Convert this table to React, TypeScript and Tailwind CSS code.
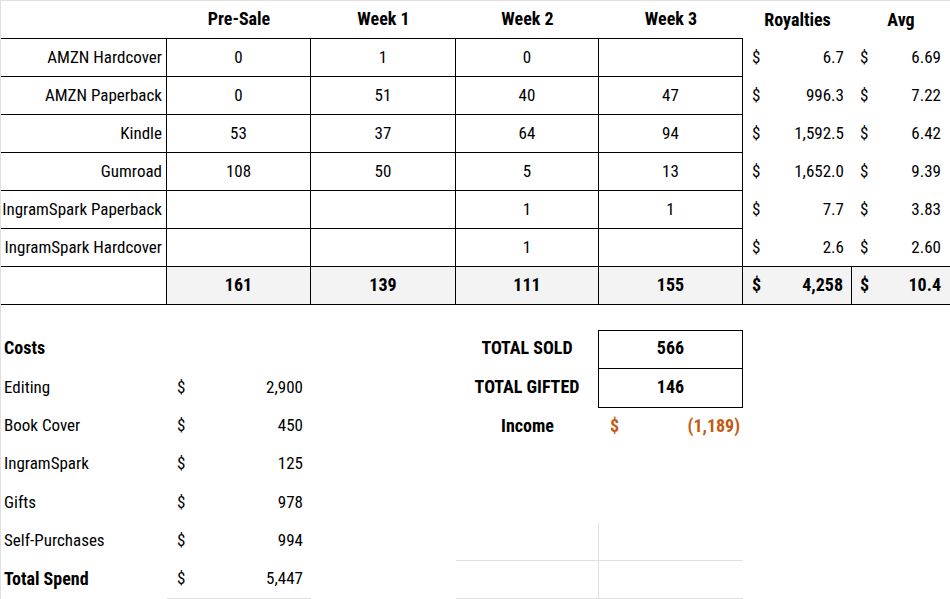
import React from 'react';

type Row = {
  label: string;
  weeks: string[];
  royalty: string;
  avg: string;
};

const rows: Row[] = [
  { label: 'AMZN Hardcover', weeks: ['0', '1', '0', ''], royalty: '6.7', avg: '6.69' },
  { label: 'AMZN Paperback', weeks: ['0', '51', '40', '47'], royalty: '996.3', avg: '7.22' },
  { label: 'Kindle', weeks: ['53', '37', '64', '94'], royalty: '1,592.5', avg: '6.42' },
  { label: 'Gumroad', weeks: ['108', '50', '5', '13'], royalty: '1,652.0', avg: '9.39' },
  { label: 'IngramSpark Paperback', weeks: ['', '', '1', '1'], royalty: '7.7', avg: '3.83' },
  { label: 'IngramSpark Hardcover', weeks: ['', '', '1', ''], royalty: '2.6', avg: '2.60' },
];

const costs = [
  { label: 'Editing', value: '2,900' },
  { label: 'Book Cover', value: '450' },
  { label: 'IngramSpark', value: '125' },
  { label: 'Gifts', value: '978' },
  { label: 'Self-Purchases', value: '994' },
];

const cols = 'grid grid-cols-[166px_144px_145px_143px_144px_109px_98px]';

const App: React.FC = () => {
  return (
    <div
      className="w-[950px] h-[599px] overflow-hidden bg-white border-t border-l border-[#e0e0e0] text-[17px] leading-none text-black whitespace-nowrap font-stretch-condensed"
      style={{ fontFamily: "'Roboto Condensed', 'DejaVu Sans Condensed', 'Liberation Sans', sans-serif" }}
    >
      {/* Sales table */}
      <div className={`${cols} [&>div]:pb-px`}>
        {/* Header */}
        <div className="h-[38px] border-b border-black" />
        {['Pre-Sale', 'Week 1', 'Week 2', 'Week 3'].map((h) => (
          <div key={h} className="h-[38px] border-b border-black flex items-center justify-center font-bold text-[18px]">
            {h}
          </div>
        ))}
        <div className="h-[38px] flex items-center justify-center font-bold text-[18px]">Royalties</div>
        <div className="h-[38px] flex items-center justify-center font-bold text-[18px]">Avg</div>

        {rows.map((r) => (
          <React.Fragment key={r.label}>
            <div className="h-[38px] border-b border-r border-black flex items-center justify-end pr-[4px]">{r.label}</div>
            {r.weeks.map((w, i) => (
              <div key={i} className="h-[38px] border-b border-r border-black flex items-center justify-center">
                {w}
              </div>
            ))}
            <div className="h-[38px] flex items-center justify-between pl-[9px] pr-[8px]">
              <span>$</span>
              <span>{r.royalty}</span>
            </div>
            <div className="h-[38px] flex items-center justify-between pl-[8px] pr-[9px]">
              <span>$</span>
              <span>{r.avg}</span>
            </div>
          </React.Fragment>
        ))}

        {/* Totals */}
        <div className="h-[38px] border-b border-r border-black" />
        {['161', '139', '111', '155'].map((t) => (
          <div key={t} className="h-[38px] border-b border-r border-black bg-[#f3f3f3] flex items-center justify-center font-bold text-[18px]">
            {t}
          </div>
        ))}
        <div className="h-[39px] -mt-px border-t border-b border-r border-black bg-[#f3f3f3] flex items-center justify-between pl-[9px] pr-[8px] font-bold text-[18px]">
          <span>$</span>
          <span>4,258</span>
        </div>
        <div className="h-[39px] -mt-px border-t border-b border-black bg-[#f3f3f3] flex items-center justify-between pl-[8px] pr-[9px] font-bold text-[18px]">
          <span>$</span>
          <span>10.4</span>
        </div>
      </div>

      {/* Costs & summary */}
      <div className={`${cols} grid-rows-[25px_39px_39px_38px_38px_39px_38px_38px] [&>div]:pb-[3px]`}>
        <div className="col-span-7" />

        {/* Costs / TOTAL SOLD */}
        <div className="flex items-center pl-[3px] font-bold text-[18px]">Costs</div>
        <div />
        <div />
        <div className="flex items-center justify-center font-bold text-[18px] border-r border-black">TOTAL SOLD</div>
        <div className="flex items-center justify-center font-bold text-[18px] border-t border-b border-r border-black">566</div>
        <div />
        <div />

        {costs.map((c, i) => (
          <React.Fragment key={c.label}>
            <div className="flex items-center pl-[3px]">{c.label}</div>
            <div className="flex items-center justify-between pl-[10px] pr-[8px]">
              <span>$</span>
              <span>{c.value}</span>
            </div>
            <div />
            {i === 0 && (
              <>
                <div className="flex items-center justify-center font-bold text-[18px] border-r border-black">TOTAL GIFTED</div>
                <div className="flex items-center justify-center font-bold text-[18px] border-b border-r border-black">146</div>
              </>
            )}
            {i === 1 && (
              <>
                <div className="flex items-center justify-center font-bold text-[18px]">Income</div>
                <div className="flex items-center justify-between pl-[11px] pr-[3px] font-bold text-[18px] text-[#c65911]">
                  <span>$</span>
                  <span>(1,189)</span>
                </div>
              </>
            )}
            {(i === 2 || i === 3) && (
              <>
                <div />
                <div />
              </>
            )}
            {i === 4 && (
              <>
                <div className="border-r border-b border-[#e0e0e0]" />
                <div className="border-b border-[#e0e0e0]" />
              </>
            )}
            <div />
            <div />
          </React.Fragment>
        ))}

        {/* Total spend */}
        <div className="flex items-center pl-[3px] font-bold text-[18px]">Total Spend</div>
        <div className="flex items-center justify-between pl-[10px] pr-[8px] border-b border-[#e0e0e0]">
          <span>$</span>
          <span>5,447</span>
        </div>
        <div />
        <div className="border-r border-b border-[#e0e0e0]" />
        <div className="border-b border-[#e0e0e0]" />
        <div />
        <div />
      </div>
    </div>
  );
};

export default App;
